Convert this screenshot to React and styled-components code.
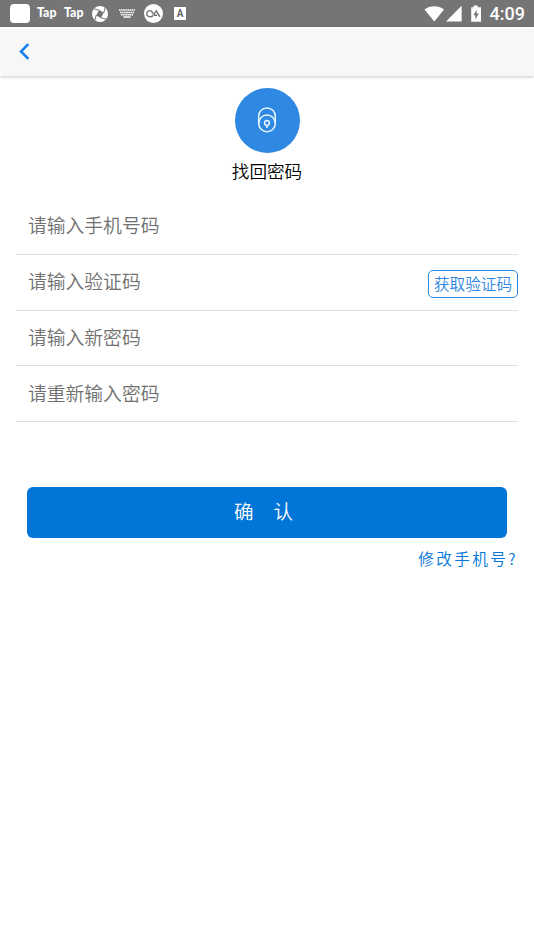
import React, { useState } from "react"
import styled, { createGlobalStyle } from "styled-components"

const fields = [
    { name: "phone", placeholder: "请输入手机号码" },
    { name: "code", placeholder: "请输入验证码", hasCode: true },
    { name: "password", placeholder: "请输入新密码", secret: true },
    { name: "repeat", placeholder: "请重新输入密码", secret: true },
]

const StatusIcons = () => (
    <Tray>
        <Blank />
        <TapLabel>Tap</TapLabel>
        <TapLabel>Tap</TapLabel>
        <Shutter viewBox="0 0 16 16" width="16" height="16">
            <circle cx="8" cy="8" r="8" fill="#fff" />
            <path d="M7 4L11.8 6.4L9 12L4.2 9.6Z" fill="#757575" />
            <g fill="none" stroke="#757575" strokeWidth="1">
                <path d="M1.6 2.8L7.6 4.3" />
                <path d="M13.2 1.6L11.7 7" />
                <path d="M14.4 13.2L8.4 11.7" />
                <path d="M2.8 14.4L4.3 9" />
            </g>
        </Shutter>
        <Keyboard viewBox="0 0 16 9" width="16" height="9">
            <g stroke="#fff" strokeWidth="1.5">
                <path d="M0 1h16" strokeDasharray="1.6 .5" />
                <path d="M1 3.4h14" strokeDasharray="1.6 .5" />
                <path d="M2 5.7h12" strokeDasharray="1.6 .5" />
                <path d="M4.5 8h7" />
            </g>
        </Keyboard>
        <Disc viewBox="0 0 19 19" width="19" height="19">
            <circle cx="9.5" cy="9.5" r="9.5" fill="#fff" />
            <path
                d="M9.3 11.2C8.3 12.5 7.4 12.8 6.2 12.8C4.2 12.8 2.8 11.5 2.8 9.7S4.2 6.6 6.2 6.6C8.8 6.6 8.6 12.5 11 8.8L12.3 6.8L16 12.8M10 11.2H13"
                fill="none"
                stroke="#757575"
                strokeWidth="1.4"
            />
        </Disc>
        <LetterBox>A</LetterBox>
    </Tray>
)

const SystemIcons = () => (
    <System>
        <svg width="58" height="18" viewBox="0 0 58 18" fill="#fff">
            <path d="M.5 4.6C6.4 .2 14.1 .2 20 4.6L10.3 16.4Z" />
            <path d="M37.6 .8V16.4H22Z" />
            <path d="M47.2 2.2H49.7V.4h4v1.8H57V16.8H47.2Z" />
            <path d="M52.8 4.4L49.4 10.3H51.4V14.6L54.8 8.4H52.6Z" fill="#757575" />
        </svg>
        <Clock>4:09</Clock>
    </System>
)

const App = () => {
    const [values, setValues] = useState({})

    return (
        <Page>
            <GlobalStyle />
            <StatusBar>
                <StatusIcons />
                <SystemIcons />
            </StatusBar>
            <Header>
                <Back type="button" aria-label="返回">
                    <svg width="11" height="17" viewBox="0 0 11 17">
                        <path d="M9.3 1.2L2 8.5L9.3 15.8" fill="none" stroke="#147eef" strokeWidth="2.5" />
                    </svg>
                </Back>
            </Header>
            <Hero>
                <Badge>
                    <svg width="20" height="28" viewBox="0 0 20 28" fill="none" stroke="#e8f6ff" strokeWidth="1.5">
                        <rect x="1.7" y="1.9" width="16.6" height="23.8" rx="8.3" />
                        <path d="M1.7 17.4a8.3 8.3 0 0 1 16.6 0" />
                        <circle cx="10" cy="17" r="2.4" />
                        <path d="M10 19.4v2.6" />
                    </svg>
                </Badge>
                <Title>找回密码</Title>
            </Hero>
            <Form onSubmit={e => e.preventDefault()}>
                {fields.map(field => (
                    <Row key={field.name}>
                        <Input
                            name={field.name}
                            type={field.secret ? "password" : "text"}
                            placeholder={field.placeholder}
                            value={values[field.name] || ""}
                            onChange={e => setValues({ ...values, [field.name]: e.target.value })}
                        />
                        {field.hasCode && <CodeButton type="button">获取验证码</CodeButton>}
                    </Row>
                ))}
                <Submit type="submit">
                    <span>确</span>
                    <span>认</span>
                </Submit>
                <ChangePhone href="#">修改手机号?</ChangePhone>
            </Form>
        </Page>
    )
}

export default App

const GlobalStyle = createGlobalStyle`
    * {
        box-sizing: border-box;
    }
    body {
        margin: 0;
        background: #fff;
        font-family: "Noto Sans CJK SC", sans-serif;
        font-weight: 350;
    }
    button, input {
        font-family: inherit;
        font-weight: inherit;
    }
`

const Page = styled.div`
    min-height: 950px;
    background: #fff;
`
const StatusBar = styled.div`
    display: flex;
    align-items: center;
    justify-content: space-between;
    height: 27px;
    padding: 0 9px 0 10px;
    background: #757575;
    color: #fff;
`
const Tray = styled.div`
    display: flex;
    align-items: center;
    height: 27px;
`
const Blank = styled.span`
    width: 20px;
    height: 19px;
    border-radius: 4px;
    background: #fff;
`
const TapLabel = styled.span`
    width: 20px;
    margin-left: 7px;
    padding-bottom: 2px;
    font: 900 12.3px/20px Lato, sans-serif;
`
const Shutter = styled.svg`
    margin-left: 8px;
`
const Keyboard = styled.svg`
    margin-left: 11px;
`
const Disc = styled.svg`
    margin-left: 9px;
`
const LetterBox = styled.span`
    width: 12px;
    height: 13px;
    margin-left: 11px;
    background: #fff;
    color: #666;
    font: 700 10px/13px Roboto, sans-serif;
    text-align: center;
`
const System = styled.div`
    display: flex;
    align-items: center;
    gap: 8px;
`
const Clock = styled.span`
    font: 500 18px/27px Roboto, sans-serif;
`
const Header = styled.header`
    display: flex;
    align-items: center;
    height: 49px;
    padding: 0 0 1px 19px;
    border-top: 1px solid #fff;
    background: #f7f7f7;
    box-shadow: 0 1px 3px rgba(0, 0, 0, 0.22);
`
const Back = styled.button`
    display: flex;
    padding: 0;
    border: 0;
    background: none;
`
const Hero = styled.div`
    display: flex;
    flex-direction: column;
    align-items: center;
    padding-top: 12px;
`
const Badge = styled.div`
    display: flex;
    align-items: center;
    justify-content: center;
    width: 65px;
    height: 65px;
    padding-bottom: 1px;
    border-radius: 50%;
    background: #2f88e1;
`
const Title = styled.h1`
    margin: 5px 0 0;
    color: #000;
    font-size: 17.6px;
    font-weight: inherit;
    line-height: 26px;
`
const Form = styled.form`
    display: flex;
    flex-direction: column;
    padding: 15px 16px 0;
`
const Row = styled.div`
    display: flex;
    align-items: center;
    height: 55.75px;
    border-bottom: 1px solid #dedede;
`
const Input = styled.input`
    flex: 1;
    min-width: 0;
    height: 40px;
    padding: 0 12px 3px;
    border: 0;
    outline: 0;
    background: none;
    color: #333;
    font-size: 18.8px;

    &::placeholder {
        color: #707070;
    }
`
const CodeButton = styled.button`
    width: 90px;
    height: 28px;
    margin-top: 4px;
    padding: 0 0 2px;
    border: 1px solid #2f88e1;
    border-radius: 5px;
    background: #fff;
    color: #2f88e1;
    font-size: 15.6px;
    line-height: 24px;
`
const Submit = styled.button`
    display: flex;
    align-items: center;
    justify-content: center;
    gap: 20px;
    height: 51px;
    margin: 65px 11px 0;
    padding: 0 7px 5px 0;
    border: 0;
    border-radius: 6px;
    background: #0275d8;
    color: #fff;
    font-size: 19.5px;
`
const ChangePhone = styled.a`
    align-self: flex-end;
    margin-top: 8px;
    color: #0275d8;
    font-size: 15.6px;
    line-height: 24px;
    letter-spacing: 2.4px;
    text-decoration: none;
`
